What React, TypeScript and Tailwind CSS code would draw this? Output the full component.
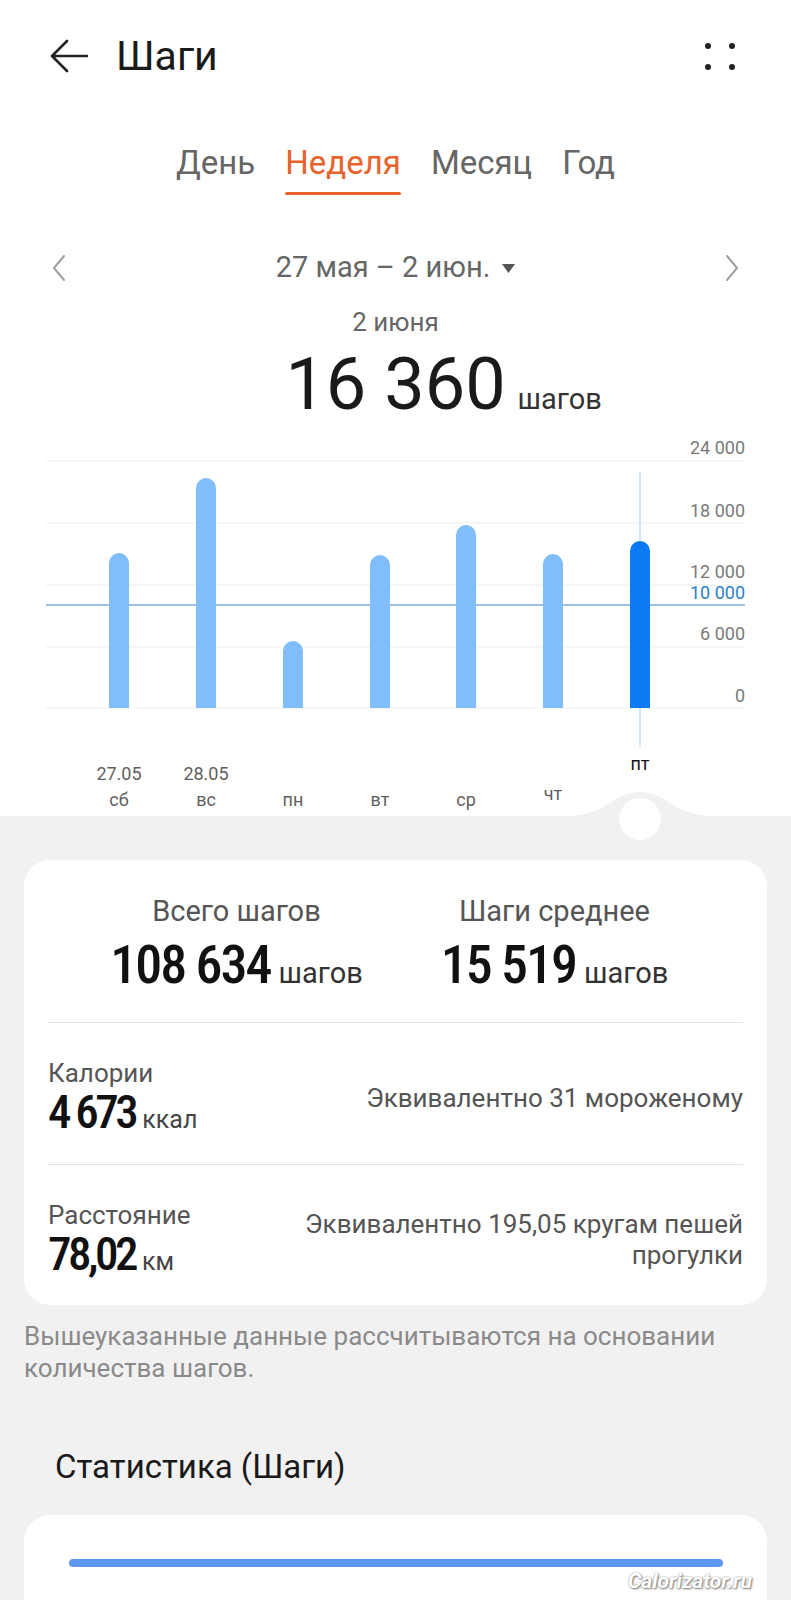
import React from 'react';

const bars = [
  { x: 119, top: 127, label: '27.05', day: 'сб' },
  { x: 206, top: 52, label: '28.05', day: 'вс' },
  { x: 293, top: 215, label: '', day: 'пн' },
  { x: 380, top: 129, label: '', day: 'вт' },
  { x: 466, top: 99, label: '', day: 'ср' },
  { x: 553, top: 128, label: '', day: 'чт' },
  { x: 640, top: 115, label: '', day: 'пт' },
];

const grid = [35, 97, 159, 221, 282];
const axis = [
  { y: 23, t: '24 000' },
  { y: 86, t: '18 000' },
  { y: 147, t: '12 000' },
  { y: 209, t: '6 000' },
  { y: 271, t: '0' },
];

function StepsChart() {
  return (
    <svg width="791" height="390" viewBox="0 0 791 390" className="block mt-[4px]">
      {grid.map((y) => (
        <line key={y} x1="46" x2="745" y1={y} y2={y} stroke="#ededed" strokeWidth="1" />
      ))}
      <line x1="46" x2="745" y1="179" y2="179" stroke="#78acd9" strokeWidth="1.5" />
      {axis.map((a) => (
        <text key={a.t} x="745" y={a.y} textAnchor="end" dominantBaseline="middle" fontSize="18" fill="#7a7a7a">
          {a.t}
        </text>
      ))}
      <text x="745" y="168" textAnchor="end" dominantBaseline="middle" fontSize="18" fill="#2b7fc6">
        10 000
      </text>
      <line x1="640" x2="640" y1="46" y2="321" stroke="#a9cff0" strokeWidth="1" />
      {bars.map((b, i) => {
        const sel = i === bars.length - 1;
        const fill = sel ? '#0a7bf2' : '#80bdfa';
        return (
          <g key={b.day}>
            <rect x={b.x - 10} y={b.top} width="20" height={282 - b.top} rx="10" fill={fill} />
            <rect x={b.x - 10} y={272} width="20" height="10" fill={fill} />
          </g>
        );
      })}
      {bars.map((b, i) => {
        const sel = i === bars.length - 1;
        const y = sel ? 339 : b.day === 'чт' ? 369 : 375;
        return (
          <g key={'l' + b.day}>
            {b.label && (
              <text x={b.x} y="349" textAnchor="middle" dominantBaseline="middle" fontSize="18" fill="#5f5f5f">
                {b.label}
              </text>
            )}
            <text x={b.x} y={y} textAnchor="middle" dominantBaseline="middle" fontSize="18" fill={sel ? '#111' : '#5f5f5f'}>
              {b.day}
            </text>
          </g>
        );
      })}
    </svg>
  );
}

function Chevron({ dir }: { dir: 'left' | 'right' }) {
  return (
    <svg width="14" height="28" viewBox="0 0 14 28" fill="none">
      <path
        d={dir === 'left' ? 'M12 2 L2 14 L12 26' : 'M2 2 L12 14 L2 26'}
        stroke="#a0a0a0"
        strokeWidth="2"
        strokeLinecap="round"
        strokeLinejoin="round"
      />
    </svg>
  );
}

const num = "font-['Roboto_Condensed','Roboto',sans-serif] font-medium text-[#111]";

export default function App() {
  return (
    <div className="relative w-[791px] min-h-[1600px] bg-[#f1f1f1] font-['Roboto','Noto_Sans',sans-serif] overflow-hidden">
      <div className="bg-white">
        {/* header */}
        <div className="h-[112px] flex items-center pl-[50px] pr-[56px]">
          <svg width="38" height="34" viewBox="0 0 38 34" fill="none">
            <path d="M37 17 H3 M17 2 L2 17 L17 32" stroke="#222" strokeWidth="2.6" strokeLinecap="round" strokeLinejoin="round" />
          </svg>
          <h1 className="ml-[28px] text-[41px] leading-none text-[#1a1a1a]">Шаги</h1>
          <div className="ml-auto grid grid-cols-2 gap-x-[18px] gap-y-[15px]">
            <span className="w-[6px] h-[6px] rounded-full bg-[#222]" />
            <span className="w-[6px] h-[6px] rounded-full bg-[#222]" />
            <span className="w-[6px] h-[6px] rounded-full bg-[#222]" />
            <span className="w-[6px] h-[6px] rounded-full bg-[#222]" />
          </div>
        </div>

        {/* tabs */}
        <div className="mt-[31px] flex justify-center gap-[30px] text-[33px] leading-[40px]">
          <div className="text-[#666]">День</div>
          <div className="flex flex-col items-stretch">
            <span className="text-[#e8642c]">Неделя</span>
            <span className="mt-[9px] h-[3px] rounded-full bg-[#e8642c]" />
          </div>
          <div className="text-[#666]">Месяц</div>
          <div className="text-[#666]">Год</div>
        </div>

        {/* date nav */}
        <div className="mt-[53px] h-[40px] flex items-center justify-between px-[52px]">
          <Chevron dir="left" />
          <div className="flex items-center gap-[12px] text-[29px] text-[#666]">
            <span>27 мая – 2 июн.</span>
            <svg width="13" height="9" viewBox="0 0 13 9">
              <path d="M0 0 H13 L6.5 9 Z" fill="#555" />
            </svg>
          </div>
          <Chevron dir="right" />
        </div>

        <div className="mt-[18px] text-center text-[26px] leading-[32px] text-[#666]">2 июня</div>

        <div className="mt-[11px] grid grid-cols-[1fr_auto_1fr] items-baseline">
          <span />
          <span className="text-[72px] leading-[72px] text-[#1a1a1a]">16 360</span>
          <span className="ml-[12px] text-[29px] text-[#333]">шагов</span>
        </div>

        <StepsChart />
      </div>

      {/* grey body */}
      <div className="relative pt-[44px]">
        <svg width="791" height="60" viewBox="0 0 791 60" className="absolute left-0 top-[-28px]">
          <path d="M566 28 C608 28 612 4 640 4 C668 4 672 28 714 28 Z" fill="#f1f1f1" />
          <circle cx="640" cy="31" r="21" fill="#ffffff" />
        </svg>

        <div className="relative mx-6 bg-white rounded-[26px] px-6 pt-[34px] pb-[25px]">
          <div className="flex justify-center">
            <div className="w-[318px] flex flex-col items-center">
              <div className="text-[29px] leading-[34px] text-[#555]">Всего шагов</div>
              <div className="mt-[11px] flex items-baseline">
                <span className={num + ' text-[54px] leading-[52px] tracking-[-2px]'}>108 634</span>
                <span className="ml-[8px] text-[29px] text-[#333]">шагов</span>
              </div>
            </div>
            <div className="w-[318px] flex flex-col items-center">
              <div className="text-[29px] leading-[34px] text-[#555]">Шаги среднее</div>
              <div className="mt-[11px] flex items-baseline">
                <span className={num + ' text-[54px] leading-[52px] tracking-[-2px]'}>15 519</span>
                <span className="ml-[8px] text-[29px] text-[#333]">шагов</span>
              </div>
            </div>
          </div>

          <div className="mt-[27px] h-px bg-[#e3e3e3]" />

          <div className="mt-[35px] mb-[25px] flex items-center justify-between">
            <div>
              <div className="text-[26px] leading-[30px] text-[#555]">Калории</div>
              <div className="flex items-baseline">
                <span className={num + ' text-[47px] leading-[48px] tracking-[-3.5px]'}>4 673</span>
                <span className="ml-[7px] text-[25px] text-[#444]">ккал</span>
              </div>
            </div>
            <div className="text-[26px] leading-[31px] text-[#555] text-right">Эквивалентно 31 мороженому</div>
          </div>

          <div className="h-px bg-[#e3e3e3]" />

          <div className="mt-[35px] flex items-center justify-between">
            <div>
              <div className="text-[26px] leading-[30px] text-[#555]">Расстояние</div>
              <div className="flex items-baseline">
                <span className={num + ' text-[47px] leading-[48px] tracking-[-3.5px]'}>78,02</span>
                <span className="ml-[7px] text-[25px] text-[#444]">км</span>
              </div>
            </div>
            <div className="text-[26px] leading-[31px] text-[#555] text-right">
              Эквивалентно 195,05 кругам пешей
              <br />
              прогулки
            </div>
          </div>
        </div>

        <p className="mt-[15px] px-6 text-[26px] leading-[32px] text-[#8a8a8a]">
          Вышеуказанные данные рассчитываются на основании количества шагов.
        </p>

        <h2 className="mt-[65px] pl-[55px] text-[33px] leading-[36px] text-[#1a1a1a]">Статистика (Шаги)</h2>

        <div className="mt-[30px] mx-6 h-[120px] bg-white rounded-[26px] pt-[44px] pl-[45px] pr-[44px]">
          <div className="h-[8px] rounded-full bg-[#5b97ee]" />
        </div>
      </div>

      <div className="absolute left-[628px] top-[1566px] text-[21px] font-bold italic text-white [text-shadow:1px_1px_2px_#777,0_0_2px_#999]">
        Calorizator.ru
      </div>
    </div>
  );
}
